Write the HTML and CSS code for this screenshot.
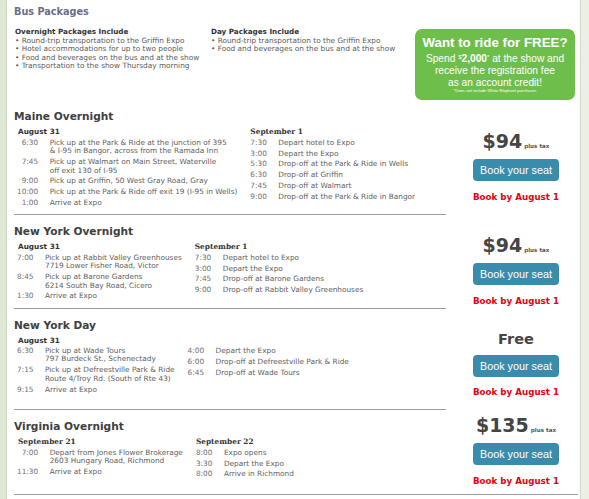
FILE: index.html
```html
<!DOCTYPE html>
<html lang="en">
<head>
<meta charset="utf-8">
<title>Bus Packages</title>
<link rel="stylesheet" href="styles.css">
</head>
<body>
<div class="page">
  <div class="rail-left"></div>
  <main class="content">
    <h1 class="page-title">Bus Packages</h1>

    <div class="intro">
      <div class="includes">
        <h2>Overnight Packages Include</h2>
        <ul>
          <li>Round-trip transportation to the Griffin Expo</li>
          <li>Hotel accommodations for up to two people</li>
          <li>Food and beverages on the bus and at the show</li>
          <li>Transportation to the show Thursday morning</li>
        </ul>
      </div>
      <div class="includes">
        <h2>Day Packages Include</h2>
        <ul>
          <li>Round-trip transportation to the Griffin Expo</li>
          <li>Food and beverages on the bus and at the show</li>
        </ul>
      </div>
      <div class="promo">
        <div class="promo-title">Want to ride for FREE?</div>
        <div class="promo-line">Spend <sup>$</sup><b>2,000</b><sup>*</sup> at the show and</div>
        <div class="promo-line">receive the registration fee</div>
        <div class="promo-line">as an account credit!</div>
        <div class="promo-note">*Does not include White Elephant purchases</div>
      </div>
    </div>

    <section class="pkg">
      <div class="pkg-info">
        <h3>Maine Overnight</h3>
        <div class="days">
          <div class="day">
            <div class="date">August 31</div>
            <table class="sched">
              <tr><td class="t">6:30</td><td>Pick up at the Park &amp; Ride at the junction of 395<br>&amp; I-95 in Bangor, across from the Ramada Inn</td></tr>
              <tr><td class="t">7:45</td><td>Pick up at Walmart on Main Street, Waterville<br>off exit 130 of I-95</td></tr>
              <tr><td class="t">9:00</td><td>Pick up at Griffin, 50 West Gray Road, Gray</td></tr>
              <tr><td class="t">10:00</td><td>Pick up at the Park &amp; Ride off exit 19 (I-95 in Wells)</td></tr>
              <tr><td class="t">1:00</td><td>Arrive at Expo</td></tr>
            </table>
          </div>
          <div class="day day-right">
            <div class="date serif">September 1</div>
            <table class="sched">
              <tr><td class="t">7:30</td><td>Depart hotel to Expo</td></tr>
              <tr><td class="t">3:00</td><td>Depart the Expo</td></tr>
              <tr><td class="t">5:30</td><td>Drop-off at the Park &amp; Ride in Wells</td></tr>
              <tr><td class="t">6:30</td><td>Drop-off at Griffin</td></tr>
              <tr><td class="t">7:45</td><td>Drop-off at Walmart</td></tr>
              <tr><td class="t">9:00</td><td>Drop-off at the Park &amp; Ride in Bangor</td></tr>
            </table>
          </div>
        </div>
      </div>
      <div class="pkg-price">
        <div class="price">$94<span class="tax">plus tax</span></div>
        <a class="btn" href="#">Book your seat</a>
        <div class="deadline">Book by August 1</div>
      </div>
    </section>

    <section class="pkg">
      <div class="pkg-info">
        <h3>New York Overnight</h3>
        <div class="days">
          <div class="day">
            <div class="date">August 31</div>
            <table class="sched">
              <tr><td class="t">7:00</td><td>Pick up at Rabbit Valley Greenhouses<br>7719 Lower Fisher Road, Victor</td></tr>
              <tr><td class="t">8:45</td><td>Pick up at Barone Gardens<br>6214 South Bay Road, Cicero</td></tr>
              <tr><td class="t">1:30</td><td>Arrive at Expo</td></tr>
            </table>
          </div>
          <div class="day day-right">
            <div class="date serif">September 1</div>
            <table class="sched">
              <tr><td class="t">7:30</td><td>Depart hotel to Expo</td></tr>
              <tr><td class="t">3:00</td><td>Depart the Expo</td></tr>
              <tr><td class="t">7:45</td><td>Drop-off at Barone Gardens</td></tr>
              <tr><td class="t">9:00</td><td>Drop-off at Rabbit Valley Greenhouses</td></tr>
            </table>
          </div>
        </div>
      </div>
      <div class="pkg-price">
        <div class="price">$94<span class="tax">plus tax</span></div>
        <a class="btn" href="#">Book your seat</a>
        <div class="deadline">Book by August 1</div>
      </div>
    </section>

    <section class="pkg pkg-tall">
      <div class="pkg-info">
        <h3>New York Day</h3>
        <div class="days">
          <div class="day">
            <div class="date">August 31</div>
            <table class="sched">
              <tr><td class="t">6:30</td><td>Pick up at Wade Tours<br>797 Burdeck St., Schenectady</td></tr>
              <tr><td class="t">7:15</td><td>Pick up at Defreestville Park &amp; Ride<br>Route 4/Troy Rd. (South of Rte 43)</td></tr>
              <tr><td class="t">9:15</td><td>Arrive at Expo</td></tr>
            </table>
          </div>
          <div class="day day-right no-date">
            <table class="sched">
              <tr><td class="t">4:00</td><td>Depart the Expo</td></tr>
              <tr><td class="t">6:00</td><td>Drop-off at Defreestville Park &amp; Ride</td></tr>
              <tr><td class="t">6:45</td><td>Drop-off at Wade Tours</td></tr>
            </table>
          </div>
        </div>
      </div>
      <div class="pkg-price">
        <div class="price free">Free</div>
        <a class="btn" href="#">Book your seat</a>
        <div class="deadline">Book by August 1</div>
      </div>
    </section>

    <section class="pkg pkg-last">
      <div class="pkg-info">
        <h3>Virginia Overnight</h3>
        <div class="days">
          <div class="day">
            <div class="date serif">September 21</div>
            <table class="sched">
              <tr><td class="t">7:00</td><td>Depart from Jones Flower Brokerage<br>2603 Hungary Road, Richmond</td></tr>
              <tr><td class="t">11:30</td><td>Arrive at Expo</td></tr>
            </table>
          </div>
          <div class="day day-right">
            <div class="date serif">September 22</div>
            <table class="sched">
              <tr><td class="t">8:00</td><td>Expo opens</td></tr>
              <tr><td class="t">3:30</td><td>Depart the Expo</td></tr>
              <tr><td class="t">8:00</td><td>Arrive in Richmond</td></tr>
            </table>
          </div>
        </div>
      </div>
      <div class="pkg-price">
        <div class="price">$135<span class="tax">plus tax</span></div>
        <a class="btn" href="#">Book your seat</a>
        <div class="deadline">Book by August 1</div>
      </div>
    </section>
  </main>
  <div class="rail-right"></div>
</div>
</body>
</html>
```

FILE: styles.css
```css
* { box-sizing: border-box; margin: 0; padding: 0; }

body {
  font-family: "DejaVu Sans", Verdana, sans-serif;
  font-size: 7.35px;
  color: #606060;
  background: #ffffff;
}

.page {
  display: flex;
  min-height: 499px;
}

.rail-left {
  width: 7px;
  flex: none;
  background: #dfe8d4;
  border-right: 1px solid #cbd8bd;
}

.rail-right {
  width: 9px;
  flex: none;
  background: #eaf0e3;
  border-left: 1px solid #d0d8ca;
}

.content {
  flex: 1;
  padding: 0 2px 0 7px;
}

.page-title {
  margin-top: 6px;
  font-size: 9.7px;
  line-height: 12px;
  font-weight: bold;
  color: #6b6d8c;
}

/* intro */
.intro {
  display: grid;
  grid-template-columns: 196px 204px 160px;
  margin: 10px 0 0 1px;
}

.includes h2 {
  font-size: 7.2px;
  line-height: 8.5px;
  font-weight: bold;
  color: #333333;
}

.includes ul { list-style: none; }

.includes li {
  line-height: 8.5px;
  color: #5a5a5a;
  white-space: nowrap;
}

.includes li::before { content: "\2022\00a0"; }

.promo {
  margin-top: 1.3px;
  height: 71px;
  border-radius: 7px;
  background: #6dbe4b;
  color: #ffffff;
  text-align: center;
  font-family: "Liberation Sans", Arial, sans-serif;
  padding-top: 7px;
}

.promo-title {
  font-size: 13.3px;
  line-height: 14px;
  font-weight: bold;
}

.promo-line {
  font-size: 10.2px;
  line-height: 12px;
}

.promo-title + .promo-line { margin-top: 3px; }

.promo-line sup {
  font-size: 6px;
  line-height: 0;
  vertical-align: 3px;
}

.promo-note {
  font-size: 4.2px;
  line-height: 6px;
  margin-top: -1px;
}

/* packages */
.pkg {
  display: grid;
  grid-template-columns: 432px 1fr;
  margin-top: 10px;
}

.intro + .pkg { margin-top: 10px; }

.pkg-info {
  padding-bottom: 5.5px;
  border-bottom: 1px solid #9d9d9d;
}

.pkg-tall .pkg-info { padding-bottom: 14px; }

.pkg-info h3 {
  font-size: 10.6px;
  line-height: 13px;
  font-weight: bold;
  color: #404040;
}

.days {
  display: flex;
  gap: 13px;
  margin-top: 4px;
}

.date {
  font-size: 7.3px;
  line-height: 9px;
  font-weight: bold;
  color: #333333;
  padding-left: 4px;
  margin-bottom: 1.15px;
}

.date.serif {
  font-family: "DejaVu Serif", Georgia, serif;
  font-size: 7.4px;
}

.day-right .date { padding-left: 0; }

.no-date { padding-top: 10.15px; }

.sched { border-collapse: collapse; }

.sched td {
  padding: 1.2px 0;
  line-height: 8.5px;
  vertical-align: top;
  white-space: nowrap;
  color: #606060;
}

.sched td.t {
  text-align: right;
  padding-left: 3px;
  padding-right: 11.5px;
  color: #707070;
}

.day-right .sched td.t {
  padding-left: 0;
  text-align: left;
}

.pkg-price {
  align-self: center;
  display: flex;
  flex-direction: column;
  align-items: center;
  padding: 8px 0 0 8px;
}

.pkg-tall .pkg-price { padding: 0 0 1.4px 8px; }

.pkg-last .pkg-price {
  align-self: start;
  padding: 0 0 0 8px;
  margin-top: -5.5px;
  margin-bottom: -6px;
}

.price {
  font-size: 19px;
  line-height: 20px;
  font-weight: bold;
  color: #454545;
  margin-bottom: 3px;
}

.price.free {
  font-size: 14.5px;
  margin-bottom: 0;
}

.tax {
  font-size: 5.6px;
  line-height: 1;
  font-weight: bold;
  color: #555555;
  margin-left: 2px;
}

.btn {
  display: block;
  width: 86px;
  height: 22px;
  margin-top: 5.5px;
  border-radius: 4px;
  background: #3a8cac;
  color: #ffffff;
  text-decoration: none;
  text-align: center;
  font-family: "Liberation Sans", Arial, sans-serif;
  font-size: 10.8px;
  line-height: 22px;
}

.deadline {
  margin-top: 10.5px;
  font-size: 8.7px;
  line-height: 11px;
  font-weight: bold;
  color: #e8000e;
}

.pkg-last {
  padding-bottom: 8px;
  border-bottom: 1px solid #9d9d9d;
}

.pkg-last .pkg-info { border-bottom: 0; }
```
